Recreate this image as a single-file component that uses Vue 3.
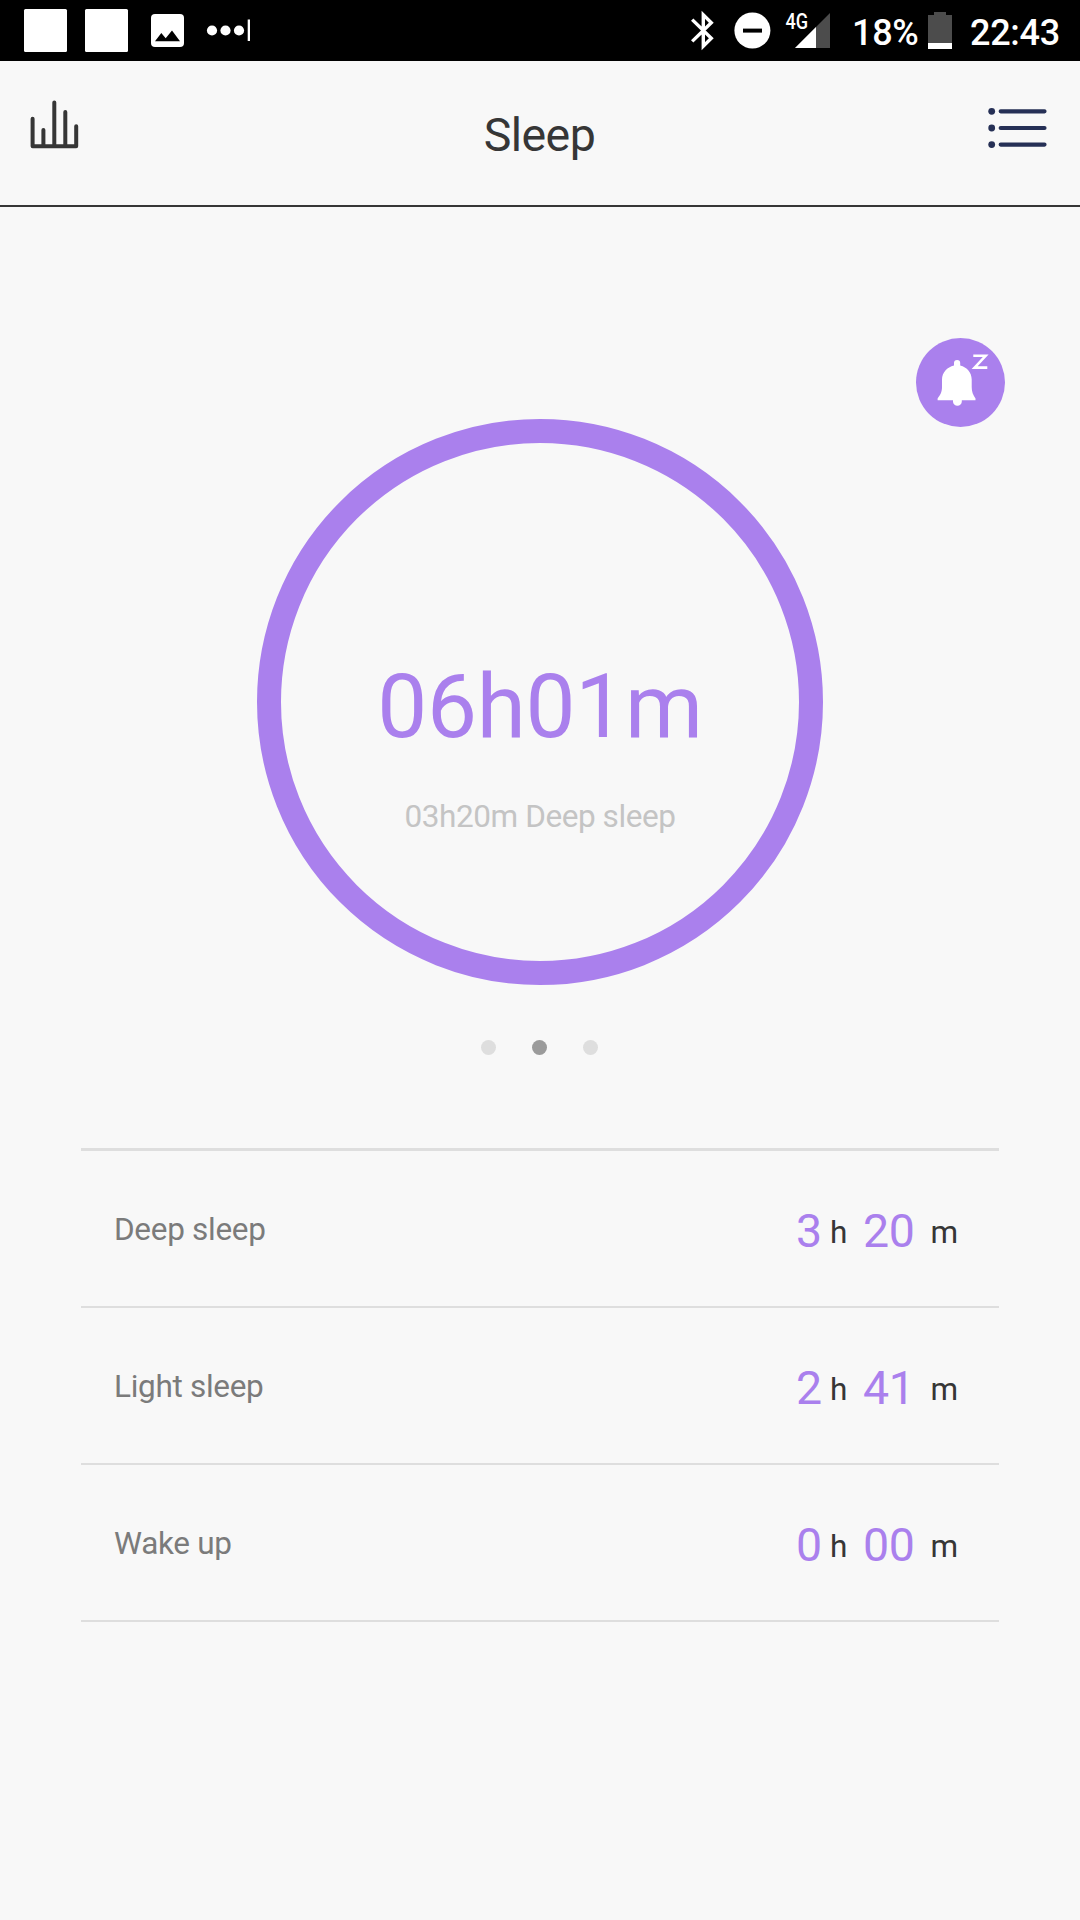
<script setup>
const rows = [
  { label: 'Deep sleep', hours: '3', minutes: '20' },
  { label: 'Light sleep', hours: '2', minutes: '41' },
  { label: 'Wake up', hours: '0', minutes: '00' },
]
const pages = [0, 1, 2]
const activePage = 1
</script>

<template>
  <div class="screen">
    <div class="status">
      <svg class="status-left" width="270" height="61" viewBox="0 0 270 61">
        <rect x="24" y="9" width="43" height="43" rx="1.5" fill="#fff" />
        <rect x="85" y="9" width="43" height="43" rx="1.5" fill="#fff" />
        <rect x="151" y="14" width="33" height="33" rx="4" fill="#fff" />
        <path d="M155 41.3L161.3 33L165.7 38.2L172 30.5L180 41.3Z" fill="#000" />
        <circle cx="212" cy="30.5" r="5.1" fill="#fff" />
        <circle cx="225.5" cy="30.5" r="5.1" fill="#fff" />
        <circle cx="239" cy="30.5" r="5.1" fill="#fff" />
        <rect x="247.7" y="19.5" width="2.3" height="21.5" fill="#fff" />
      </svg>
      <svg class="radios" width="150" height="61" viewBox="685 0 150 61">
        <path d="M692.2 19.6L711.3 38.3L703.3 46.2V14.8L711.3 22.7L692.2 41.4" fill="none" stroke="#fff" stroke-width="3.4" />
        <circle cx="752.4" cy="30.5" r="18" fill="#fff" />
        <rect x="743" y="28.6" width="19" height="4" fill="#000" />
        <path d="M830 13V48H795Z" fill="#4c4c4c" />
        <path d="M816 27V48H795Z" fill="#fff" />
        <text class="net" x="785.4" y="28.6" textLength="22.6" lengthAdjust="spacingAndGlyphs">4G</text>
      </svg>
      <span class="percent">18%</span>
      <svg class="battery" width="24" height="37" viewBox="0 0 24 37">
        <path d="M6 0H18V3H24V31H0V3H6Z" fill="#4c4c4c" />
        <rect y="31" width="24" height="6" fill="#fff" />
      </svg>
      <span class="clock">22:43</span>
    </div>

    <header class="header">
      <svg class="chart" width="52" height="54" viewBox="28 98 52 54" fill="none" stroke="#363636" stroke-width="4" stroke-linecap="round" stroke-linejoin="round">
        <path d="M32.6 118.8V146.3H76.2V126.2M43.4 146V130M54.3 146V102.5M65.3 146V112" />
      </svg>
      <h1>Sleep</h1>
      <svg class="menu" width="62" height="46" viewBox="986 105 62 46">
        <g fill="#263056">
          <circle cx="991.7" cy="111.3" r="3.4" />
          <circle cx="991.7" cy="128" r="3.4" />
          <circle cx="991.7" cy="144.6" r="3.4" />
        </g>
        <path d="M1000.7 111.3H1044.5M1000.7 128H1044.5M1000.7 144.6H1044.5" stroke="#263056" stroke-width="4.2" stroke-linecap="round" />
      </svg>
    </header>

    <main>
      <svg class="alarm" width="89" height="89" viewBox="0 0 89 89">
        <circle cx="44.5" cy="44.5" r="44.5" fill="#aa80ed" />
        <path fill="#fff" d="M38 27.5V25A3.1 3.1 0 0 1 44.2 25V27.5C51 29.3 55.6 34.5 55.7 41.5V49C55.7 54 57 56.5 59.5 60.5V62.3H45.8V63.4A4.4 4.4 0 0 1 37 63.4V62.3H21.6V60.5C24.5 56.5 26 54 26 49V41.5C26.2 34.5 31 29.3 38 27.5Z" />
        <path d="M57.3 17.8H69.6L58.6 29.6H71.3" fill="none" stroke="#fff" stroke-width="2.6" />
      </svg>

      <section class="ring">
        <div class="total">06h01m</div>
        <div class="deep">03h20m Deep sleep</div>
      </section>

      <div class="dots">
        <i v-for="p in pages" :key="p" :class="{ on: p === activePage }"></i>
      </div>

      <ul class="list">
        <li v-for="row in rows" :key="row.label">
          <span class="label">{{ row.label }}</span>
          <span class="num hours">{{ row.hours }}</span>
          <span class="unit h">h</span>
          <span class="num minutes">{{ row.minutes }}</span>
          <span class="unit">m</span>
        </li>
      </ul>
    </main>
  </div>
</template>

<style>
body {
  margin: 0;
  background: #f8f8f8;
}
</style>

<style scoped>
.screen {
  width: 1080px;
  height: 1920px;
  overflow: hidden;
  display: flex;
  flex-direction: column;
  background: #f8f8f8;
  color: #363636;
  font-family: Roboto, "Liberation Sans", sans-serif;
}
svg {
  display: block;
  flex: none;
}
.status {
  height: 61px;
  flex: none;
  display: flex;
  background: #000;
  color: #fff;
  font-size: 36px;
  font-weight: 500;
  letter-spacing: -0.3px;
  line-height: 67px;
  white-space: nowrap;
}
.radios {
  margin-left: 415px;
}
.net {
  font-size: 21.5px;
  font-weight: 500;
  letter-spacing: 0;
  fill: #fff;
}
.percent {
  width: 76px;
  margin-left: 17px;
}
.battery {
  margin-top: 12px;
}
.clock {
  margin-left: 18px;
}
.header {
  box-sizing: border-box;
  height: 146px;
  flex: none;
  display: flex;
  justify-content: space-between;
  padding: 0 32px 0 28px;
  border-bottom: 2px solid #363636;
}
.chart {
  margin-top: 37px;
}
.menu {
  margin-top: 44px;
}
h1 {
  margin: 44px 0 0 13px;
  font-size: 46.5px;
  font-weight: 400;
  letter-spacing: -0.6px;
  line-height: 60px;
}
main {
  display: flex;
  flex-direction: column;
  padding: 131px 81px 0;
}
.alarm {
  align-self: flex-end;
  margin-right: -6px;
}
.ring {
  box-sizing: border-box;
  width: 566px;
  height: 566px;
  margin-top: -8px;
  padding-top: 214px;
  align-self: center;
  border: 24px solid #aa80ed;
  border-radius: 50%;
  text-align: center;
}
.total {
  font-size: 89px;
  letter-spacing: -0.3px;
  line-height: 100px;
  color: #aa80ed;
}
.deep {
  margin-top: 40px;
  font-size: 31.5px;
  letter-spacing: -0.43px;
  line-height: 40px;
  color: #c4c4c4;
}
.dots {
  display: flex;
  justify-content: center;
  gap: 36px;
  margin: 55px 1px 93px 0;
}
.dots i {
  width: 15px;
  height: 15px;
  border-radius: 50%;
  background: #dedede;
}
.dots i.on {
  background: #9b9b9b;
}
.list {
  margin: 0;
  padding: 0;
  list-style: none;
  border-top: 3px solid #dedede;
}
li {
  box-sizing: border-box;
  height: 157px;
  display: flex;
  align-items: flex-start;
  padding: 0 0 0 33px;
  border-bottom: 2px solid #dedede;
}
.label {
  width: 682px;
  font-size: 31.5px;
  letter-spacing: -0.3px;
  line-height: 158px;
  color: #7b7b7b;
}
.num {
  font-size: 46.5px;
  letter-spacing: -0.3px;
  line-height: 160px;
  color: #aa80ed;
}
.hours {
  width: 34px;
}
.minutes {
  width: 67.5px;
}
.unit {
  font-size: 31.5px;
  line-height: 164px;
}
.h {
  width: 33px;
}
</style>
